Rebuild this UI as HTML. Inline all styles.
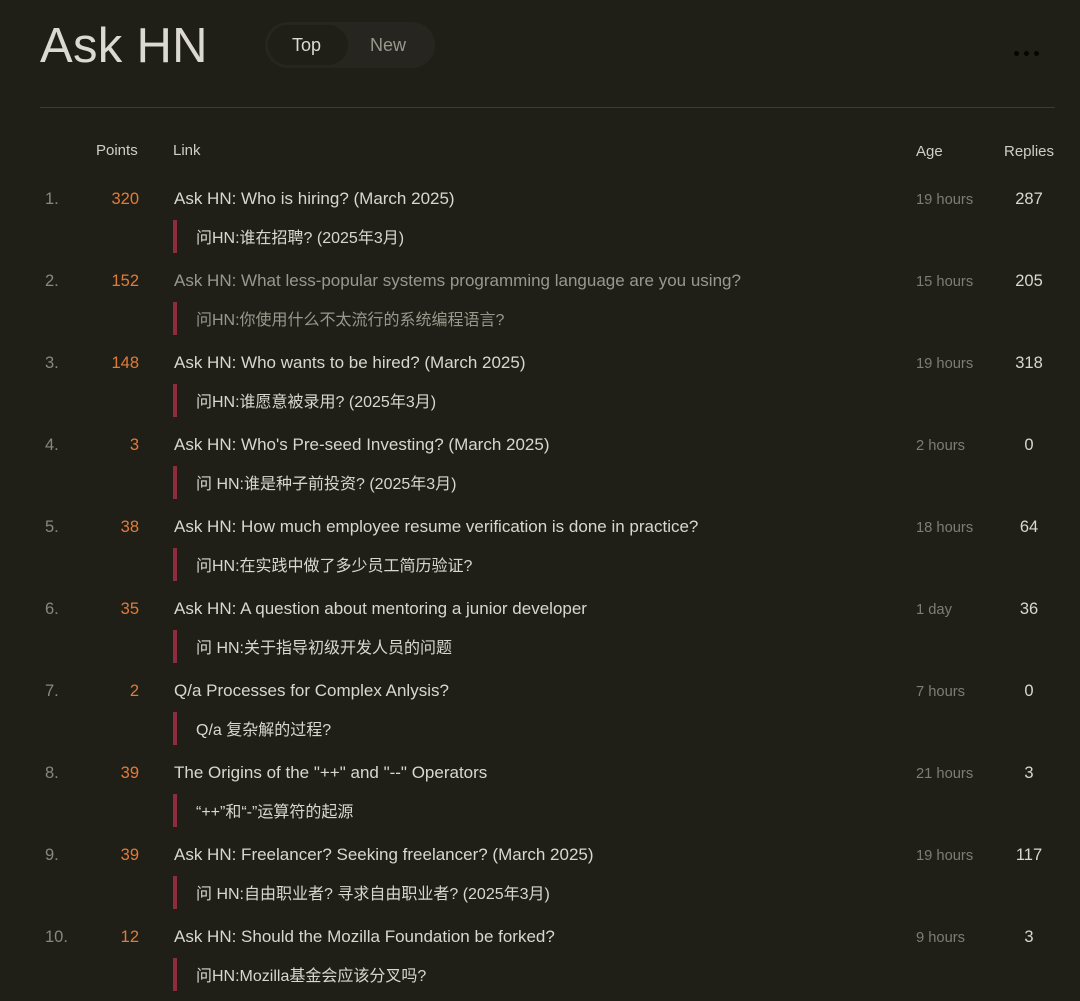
<!DOCTYPE html>
<html><head><meta charset="utf-8"><style>
*{margin:0;padding:0;box-sizing:border-box}
body{width:1080px;height:1001px;background:#201f17;font-family:"Liberation Sans","Noto Sans CJK SC",sans-serif;position:relative;overflow:hidden;color:#d9d7cd}
.a{position:absolute;white-space:nowrap;line-height:20px}
h1{position:absolute;left:40px;top:16px;font-size:49px;font-weight:400;color:#dcdad0;letter-spacing:0.3px;line-height:60px}
.pill{position:absolute;left:265px;top:22px;width:170px;height:46px;border-radius:23px;background:#262520}
.top{position:absolute;left:268px;top:25px;width:80px;height:40px;border-radius:20px;background:#1f1e17}
.hr{position:absolute;left:40px;top:107px;width:1015px;height:1px;background:#3a3a36}
.dot{position:absolute;top:51px;width:5px;height:5px;border-radius:50%;background:#050504}
.h{font-size:15px;color:#d0cec4}
.n{font-size:16.5px;color:#8a877c;left:45px}
.p{font-size:16.5px;color:#e07b39;right:941px;text-align:right}
.t{font-size:17px;color:#d9d7cd;left:174px}
.s{font-size:16px;color:#d9d7cd;left:196px}
.g{color:#9a978c}
.bar{position:absolute;left:173px;width:4px;height:33px;background:#8c2c3c}
.ag{font-size:14.7px;color:#7f7c72;left:916px}
.r{font-size:16.5px;color:#dad8ce;left:1000px;width:58px;text-align:center}
.s{margin-top:2px}
</style></head><body>
<h1>Ask HN</h1>
<div class="pill"></div><div class="top"></div>
<div class="a" style="left:292px;top:35px;font-size:18px;color:#dcdad0">Top</div>
<div class="a" style="left:370px;top:35px;font-size:18px;color:#9a978c">New</div>
<div class="dot" style="left:1014px"></div><div class="dot" style="left:1024px"></div><div class="dot" style="left:1034px"></div>
<div class="hr"></div>
<div class="a h" style="left:96px;top:141px">Points</div>
<div class="a h" style="left:173px;top:141px">Link</div>
<div class="a h" style="left:916px;top:142px">Age</div>
<div class="a h" style="left:1004px;top:142px">Replies</div>

<div class="a n" style="top:189px">1.</div><div class="a p" style="top:189px">320</div>
<div class="a t" style="top:189px">Ask HN: Who is hiring? (March 2025)</div>
<div class="bar" style="top:220px"></div><div class="a s" style="top:227px">问HN:谁在招聘? (2025年3月)</div>
<div class="a ag" style="top:190px">19 hours</div><div class="a r" style="top:189px">287</div>

<div class="a n" style="top:271px">2.</div><div class="a p" style="top:271px">152</div>
<div class="a t g" style="top:271px">Ask HN: What less-popular systems programming language are you using?</div>
<div class="bar" style="top:302px"></div><div class="a s g" style="top:309px">问HN:你使用什么不太流行的系统编程语言?</div>
<div class="a ag" style="top:272px">15 hours</div><div class="a r" style="top:271px">205</div>

<div class="a n" style="top:353px">3.</div><div class="a p" style="top:353px">148</div>
<div class="a t" style="top:353px">Ask HN: Who wants to be hired? (March 2025)</div>
<div class="bar" style="top:384px"></div><div class="a s" style="top:391px">问HN:谁愿意被录用? (2025年3月)</div>
<div class="a ag" style="top:354px">19 hours</div><div class="a r" style="top:353px">318</div>

<div class="a n" style="top:435px">4.</div><div class="a p" style="top:435px">3</div>
<div class="a t" style="top:435px">Ask HN: Who's Pre-seed Investing? (March 2025)</div>
<div class="bar" style="top:466px"></div><div class="a s" style="top:473px">问 HN:谁是种子前投资? (2025年3月)</div>
<div class="a ag" style="top:436px">2 hours</div><div class="a r" style="top:435px">0</div>

<div class="a n" style="top:517px">5.</div><div class="a p" style="top:517px">38</div>
<div class="a t" style="top:517px">Ask HN: How much employee resume verification is done in practice?</div>
<div class="bar" style="top:548px"></div><div class="a s" style="top:555px">问HN:在实践中做了多少员工简历验证?</div>
<div class="a ag" style="top:518px">18 hours</div><div class="a r" style="top:517px">64</div>

<div class="a n" style="top:599px">6.</div><div class="a p" style="top:599px">35</div>
<div class="a t" style="top:599px">Ask HN: A question about mentoring a junior developer</div>
<div class="bar" style="top:630px"></div><div class="a s" style="top:637px">问 HN:关于指导初级开发人员的问题</div>
<div class="a ag" style="top:600px">1 day</div><div class="a r" style="top:599px">36</div>

<div class="a n" style="top:681px">7.</div><div class="a p" style="top:681px">2</div>
<div class="a t" style="top:681px">Q/a Processes for Complex Anlysis?</div>
<div class="bar" style="top:712px"></div><div class="a s" style="top:719px">Q/a 复杂解的过程?</div>
<div class="a ag" style="top:682px">7 hours</div><div class="a r" style="top:681px">0</div>

<div class="a n" style="top:763px">8.</div><div class="a p" style="top:763px">39</div>
<div class="a t" style="top:763px">The Origins of the "++" and "--" Operators</div>
<div class="bar" style="top:794px"></div><div class="a s" style="top:801px">“++”和“-”运算符的起源</div>
<div class="a ag" style="top:764px">21 hours</div><div class="a r" style="top:763px">3</div>

<div class="a n" style="top:845px">9.</div><div class="a p" style="top:845px">39</div>
<div class="a t" style="top:845px">Ask HN: Freelancer? Seeking freelancer? (March 2025)</div>
<div class="bar" style="top:876px"></div><div class="a s" style="top:883px">问 HN:自由职业者? 寻求自由职业者? (2025年3月)</div>
<div class="a ag" style="top:846px">19 hours</div><div class="a r" style="top:845px">117</div>

<div class="a n" style="top:927px">10.</div><div class="a p" style="top:927px">12</div>
<div class="a t" style="top:927px">Ask HN: Should the Mozilla Foundation be forked?</div>
<div class="bar" style="top:958px"></div><div class="a s" style="top:965px">问HN:Mozilla基金会应该分叉吗?</div>
<div class="a ag" style="top:928px">9 hours</div><div class="a r" style="top:927px">3</div>
</body></html>
